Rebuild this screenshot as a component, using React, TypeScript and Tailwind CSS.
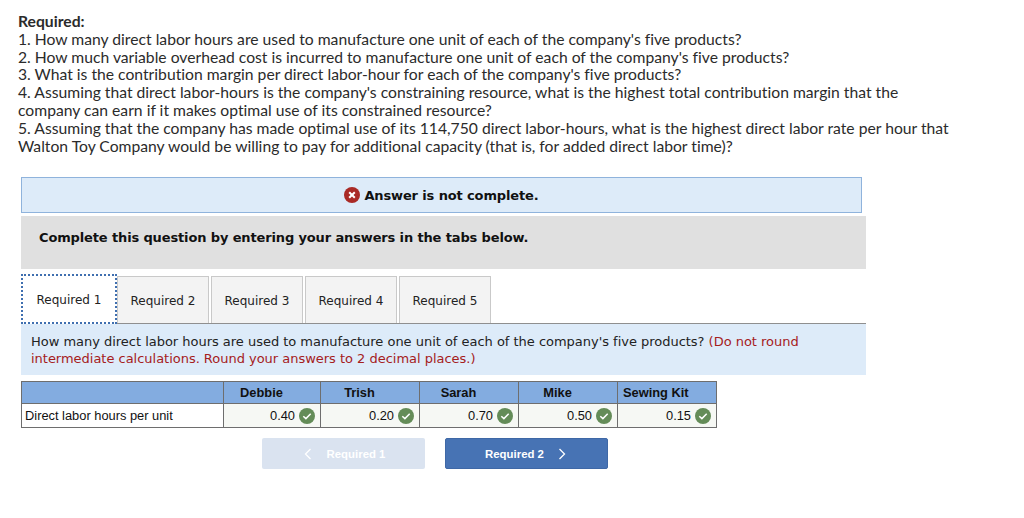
import React from "react";

const verdana = "font-['DejaVu_Sans',sans-serif]";

function Check() {
  return (
    <svg width="16" height="16" viewBox="0 0 16 16" className="shrink-0">
      <circle cx="8" cy="8" r="8" fill="#648c58" />
      <path d="M4.3 8.2 L6.9 10.6 L11.7 5.8" fill="none" stroke="#ffffff" strokeWidth="1.5" />
    </svg>
  );
}

function Cross() {
  return (
    <svg width="16" height="16" viewBox="0 0 16 16" className="shrink-0">
      <circle cx="8" cy="8" r="8" fill="#a92a26" />
      <path d="M5.2 5.2 L10.8 10.8 M10.8 5.2 L5.2 10.8" fill="none" stroke="#ffffff" strokeWidth="2" />
    </svg>
  );
}

const tabs = ["Required 2", "Required 3", "Required 4", "Required 5"];
const cols: [string, string, string, string][] = [
  ["Debbie", "0.40", "w-[97px]", "justify-center pr-[21px]"],
  ["Trish", "0.20", "w-[99px]", "justify-center pr-[21px]"],
  ["Sarah", "0.70", "w-[99px]", "justify-center pr-[21px]"],
  ["Mike", "0.50", "w-[99px]", "justify-center pr-[21px]"],
  ["Sewing Kit", "0.15", "w-[99px]", "justify-start pl-[5px]"],
];

export default function App() {
  return (
    <div className="w-[1024px] h-[518px] bg-white overflow-hidden">
      <div className="pl-[18px] pt-[13px] pr-[60px] font-['Lato',sans-serif] text-[15.7px] leading-[17.8px] text-[#2b2b2b] [font-variant-ligatures:none]">
        <div className="font-bold">Required:</div>
        <div>1. How many direct labor hours are used to manufacture one unit of each of the company's five products?</div>
        <div>2. How much variable overhead cost is incurred to manufacture one unit of each of the company's five products?</div>
        <div>3. What is the contribution margin per direct labor-hour for each of the company's five products?</div>
        <div>4. Assuming that direct labor-hours is the company's constraining resource, what is the highest total contribution margin that the<br />company can earn if it makes optimal use of its constrained resource?</div>
        <div>5. Assuming that the company has made optimal use of its 114,750 direct labor-hours, what is the highest direct labor rate per hour that<br />Walton Toy Company would be willing to pay for additional capacity (that is, for added direct labor time)?</div>
      </div>

      <div className="ml-[21px] mt-[22px] w-[845px]">
        <div className={`w-[841px] h-[36px] bg-[#ddebf9] border border-[#8fb3dc] flex items-center justify-center gap-[4px] ${verdana} text-[13px] tracking-[-0.13px] font-bold text-[#111111]`}>
          <Cross />
          <span>Answer is not complete.</span>
        </div>
        <div className={`mt-[3px] h-[53px] bg-[#e0e0e0] pl-[18px] pt-[13px] ${verdana} text-[13px] tracking-[-0.135px] leading-[18px] font-bold text-[#111111]`}>
          Complete this question by entering your answers in the tabs below.
        </div>

        <div className={`mt-[5px] h-[49px] flex items-start ${verdana} text-[12px] text-[#222222]`}>
          <div className="w-[96px] h-[50px] -mb-[1px] pt-[2px] bg-white border-2 border-dotted border-[#3f6fb0] flex items-center justify-center relative z-10">
            Required 1
          </div>
          <div className="flex gap-[2px] mt-[2px]">
            {tabs.map((t) => (
              <div key={t} className="w-[92px] h-[47px] pt-[1px] bg-[#f3f3f3] border border-[#c9c9c9] border-b-0 flex items-center justify-center">
                {t}
              </div>
            ))}
          </div>
        </div>

        <div className={`h-[52px] bg-[#ddebf9] border-t border-[#8f8f8f] pl-[10px] pt-[9px] ${verdana} text-[13px] tracking-[-0.02px] leading-[17px] text-[#222222]`}>
          How many direct labor hours are used to manufacture one unit of each of the company's five products? <span className="text-[#a5201c]">(Do not round<br />intermediate calculations. Round your answers to 2 decimal places.)</span>
        </div>

        <div className="mt-[6px] w-[696px] border border-[#6e6e6e] font-['Liberation_Sans',sans-serif] text-[12.85px] text-[#111111]">
          <div className="flex h-[22px] bg-[#83ace0] border-b border-[#6e6e6e] font-bold">
            <div className="w-[201px] shrink-0" />
            {cols.map(([name, , w, align]) => (
              <div key={name} className={`${w} shrink-0 border-l border-[#6e6e6e] flex items-center ${align} last:flex-1`}>
                {name}
              </div>
            ))}
          </div>
          <div className="flex h-[23px]">
            <div className="w-[201px] shrink-0 flex items-center pl-[3px] bg-white">Direct labor hours per unit</div>
            {cols.map(([name, value, w]) => (
              <div key={name} className={`${w} shrink-0 border-l border-[#6e6e6e] bg-[#f6f8f4] flex items-center justify-end gap-[4px] pr-[5px] last:flex-1`}>
                <span>{value}</span>
                <Check />
              </div>
            ))}
          </div>
        </div>

        <div className="mt-[10px] ml-[241px] flex gap-[20px] font-['Liberation_Sans',sans-serif] text-[11.4px] font-bold text-white">
          <div className="w-[163px] h-[31px] pt-[1px] pl-[2px] rounded-[2px] bg-[#dae3f0] flex items-center justify-center gap-[15px]">
            <svg width="8" height="12" viewBox="0 0 8 12"><path d="M6.5 1 L1.5 6 L6.5 11" fill="none" stroke="#ffffff" strokeWidth="1.3" /></svg>
            <span>Required 1</span>
          </div>
          <div className="w-[163px] h-[31px] pt-[1px] pr-[2px] rounded-[2px] bg-[#4773b4] border border-[#3f68a6] flex items-center justify-center gap-[14px]">
            <span>Required 2</span>
            <svg width="8" height="12" viewBox="0 0 8 12"><path d="M1.5 1 L6.5 6 L1.5 11" fill="none" stroke="#ffffff" strokeWidth="1.3" /></svg>
          </div>
        </div>
      </div>
    </div>
  );
}
